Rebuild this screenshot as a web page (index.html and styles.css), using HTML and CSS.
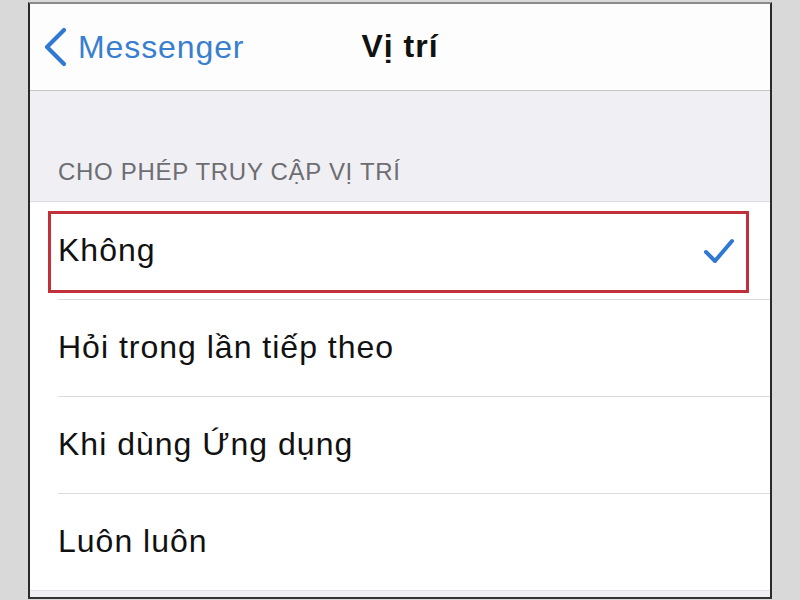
FILE: index.html
```html
<!DOCTYPE html>
<html lang="vi">
<head>
<meta charset="utf-8">
<title>Vị trí</title>
<link rel="stylesheet" href="styles.css">
</head>
<body>
<div class="frame">
  <header class="nav">
    <div class="back">
      <svg class="chev" width="25" height="40" viewBox="0 0 25 40"><path d="M21 3 L4 20 L21 37" fill="none" stroke="#2f78d4" stroke-width="4.2" stroke-linecap="round" stroke-linejoin="round"/></svg>
      <span class="back-label">Messenger</span>
    </div>
    <div class="title">Vị trí</div>
    <div class="spacer"></div>
  </header>
  <div class="section-head">CHO PHÉP TRUY CẬP VỊ TRÍ</div>
  <ul class="list">
    <li class="row"><span class="label">Không</span>
      <svg class="check" width="32" height="28" viewBox="0 0 32 28"><path d="M3 15 L12 24 L29 4" fill="none" stroke="#2f78d4" stroke-width="4" stroke-linecap="round" stroke-linejoin="round"/></svg>
    </li>
    <li class="row"><span class="label">Hỏi trong lần tiếp theo</span></li>
    <li class="row"><span class="label">Khi dùng Ứng dụng</span></li>
    <li class="row"><span class="label">Luôn luôn</span></li>
  </ul>
  <div class="foot"></div>
  <div class="highlight"></div>
</div>
</body>
</html>
```
FILE: styles.css
```css
* { box-sizing: border-box; }
html, body { margin: 0; padding: 0; }
body {
  background: #d9d9d9;
  width: 800px;
  height: 600px;
  overflow: hidden;
  font-family: "Liberation Sans", Arial, sans-serif;
}
.frame {
  position: relative;
  margin: 2px 0 0 28px;
  width: 744px;
  height: 597px;
  border-top: 2px solid #8c8c8c;
  border-left: 2px solid #2a2a2a;
  border-right: 2px solid #2a2a2a;
  border-bottom: 2px solid #333;
  background: #efeff4;
  display: flex;
  flex-direction: column;
}
.nav {
  height: 87px;
  background: #fdfdfd;
  border-bottom: 1px solid #c6c6c8;
  display: grid;
  grid-template-columns: 1fr auto 1fr;
  align-items: center;
}
.back {
  display: flex;
  align-items: center;
  padding-left: 13px;
  gap: 10px;
}
.chev { display: block; }
.back-label {
  color: #3a7ecf;
  font-size: 32px;
  letter-spacing: 0.9px;
}
.title {
  font-size: 32px;
  font-weight: bold;
  color: #111;
  letter-spacing: 1px;
  padding-bottom: 2px;
}
.section-head {
  height: 110px;
  display: flex;
  align-items: flex-end;
  padding: 0 0 15px 28px;
  color: #6d6d72;
  font-size: 24px;
  letter-spacing: 0.7px;
}
.list {
  list-style: none;
  margin: 0;
  padding: 0;
  background: #fff;
  border-top: 1px solid #dcdce0;
}
.row {
  position: relative;
  height: 97px;
  display: flex;
  align-items: center;
  justify-content: space-between;
  padding: 0 35px 0 28px;
}
.row + .row::before {
  content: "";
  position: absolute;
  left: 28px;
  right: 0;
  top: 0;
  border-top: 1px solid #dcdce0;
}
.label {
  font-size: 32px;
  letter-spacing: 1px;
  color: #111;
}
.check { display: block; }
.foot {
  flex: 1;
  background: #efeff4;
  border-top: 1px solid #e2e2e6;
}
.highlight {
  position: absolute;
  left: 18px;
  top: 207px;
  width: 701px;
  height: 82px;
  border: 3px solid #c2303a;
}
```
